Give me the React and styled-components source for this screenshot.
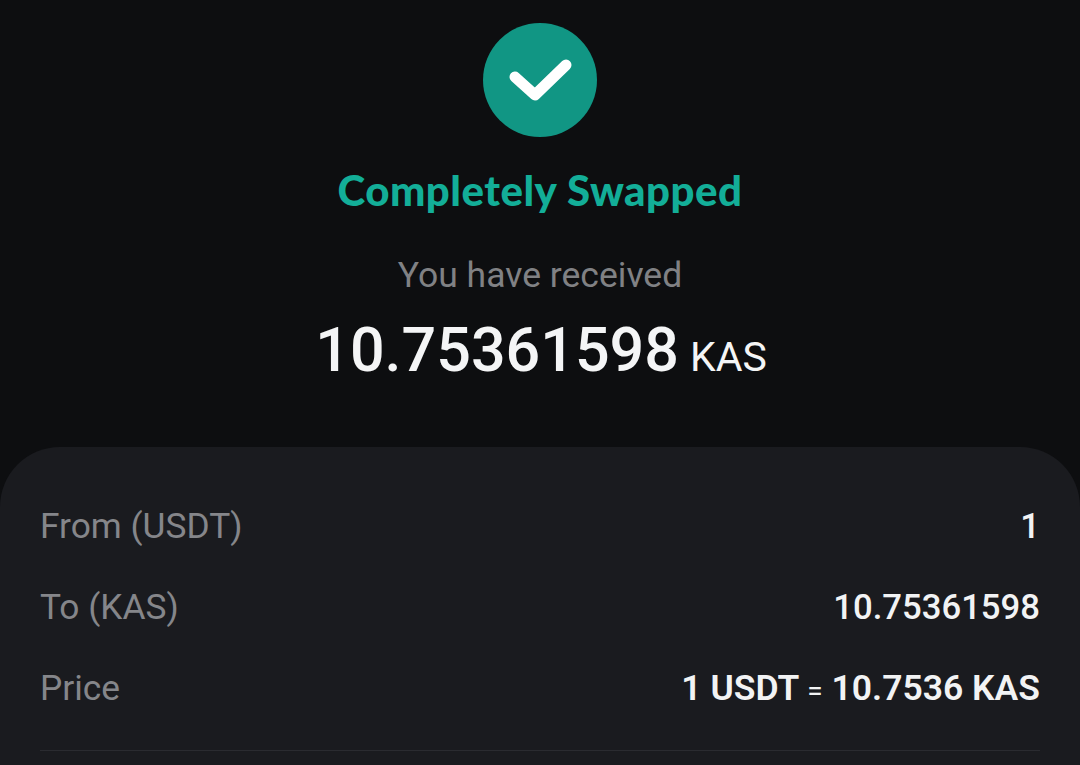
import React from 'react';
import styled, { createGlobalStyle } from 'styled-components';

const GlobalStyle = createGlobalStyle`
  html, body {
    margin: 0;
    height: 100%;
    background: #0d0e10;
    overflow: hidden;
  }
`;

const Screen = styled.div`
  width: 1080px;
  height: 765px;
  display: flex;
  flex-direction: column;
  align-items: center;
  overflow: hidden;
  font-family: Roboto, "Liberation Sans", sans-serif;
`;

const StatusCircle = styled.div`
  flex: none;
  width: 114px;
  height: 114px;
  margin-top: 23px;
  border-radius: 50%;
  background: #119684;
  display: flex;
  align-items: center;
  justify-content: center;
`;

const Title = styled.h1`
  margin: 27px 0 0;
  font-family: Lato, sans-serif;
  font-size: 42px;
  line-height: 52px;
  font-weight: 900;
  letter-spacing: 0.5px;
  color: #13ae98;
`;

const Subtitle = styled.div`
  margin-top: 37px;
  font-size: 35.5px;
  line-height: 44px;
  color: #808184;
`;

const Amount = styled.div`
  margin-top: 17px;
  margin-left: 2px;
  display: flex;
  align-items: baseline;
  gap: 11px;
  color: #f4f5f6;
`;

const AmountValue = styled.span`
  font-size: 61px;
  line-height: 72px;
  font-weight: 500;
`;

const AmountUnit = styled.span`
  font-size: 41px;
  line-height: 72px;
`;

const Panel = styled.section`
  flex: 1;
  align-self: stretch;
  margin-top: 54px;
  padding: 58px 40px 0;
  background: #1a1b1f;
  border-radius: 60px 60px 0 0;
`;

const Rows = styled.div`
  display: flex;
  flex-direction: column;
  gap: 39px;
  padding-bottom: 41px;
  border-bottom: 1px solid #2a2b30;
`;

const Row = styled.div`
  display: flex;
  justify-content: space-between;
  align-items: center;
  height: 42px;
`;

const Label = styled.span`
  font-size: 35.3px;
  color: #85868a;
`;

const Value = styled.span`
  font-size: ${(props) => (props.$strong ? '35.5px' : '34.7px')};
  font-weight: ${(props) => (props.$strong ? 600 : 500)};
  color: #f2f3f4;
`;

const Equals = styled.span`
  font-size: 28px;
  font-weight: 400;
`;

const CheckMark = () => (
  <svg width="64" height="48" viewBox="0 0 64 48" fill="none">
    <path d="M7 21 L27 39 L58 9" stroke="#fff" strokeWidth="11" strokeLinecap="round" strokeLinejoin="round" />
  </svg>
);

const App = () => (
  <Screen>
    <GlobalStyle />
    <StatusCircle>
      <CheckMark />
    </StatusCircle>
    <Title>Completely Swapped</Title>
    <Subtitle>You have received</Subtitle>
    <Amount>
      <AmountValue>10.75361598</AmountValue>
      <AmountUnit>KAS</AmountUnit>
    </Amount>
    <Panel>
      <Rows>
        <Row>
          <Label>From (USDT)</Label>
          <Value>1</Value>
        </Row>
        <Row>
          <Label>To (KAS)</Label>
          <Value>10.75361598</Value>
        </Row>
        <Row>
          <Label>Price</Label>
          <Value $strong>1 USDT <Equals>=</Equals> 10.7536 KAS</Value>
        </Row>
      </Rows>
    </Panel>
  </Screen>
);

export default App;
